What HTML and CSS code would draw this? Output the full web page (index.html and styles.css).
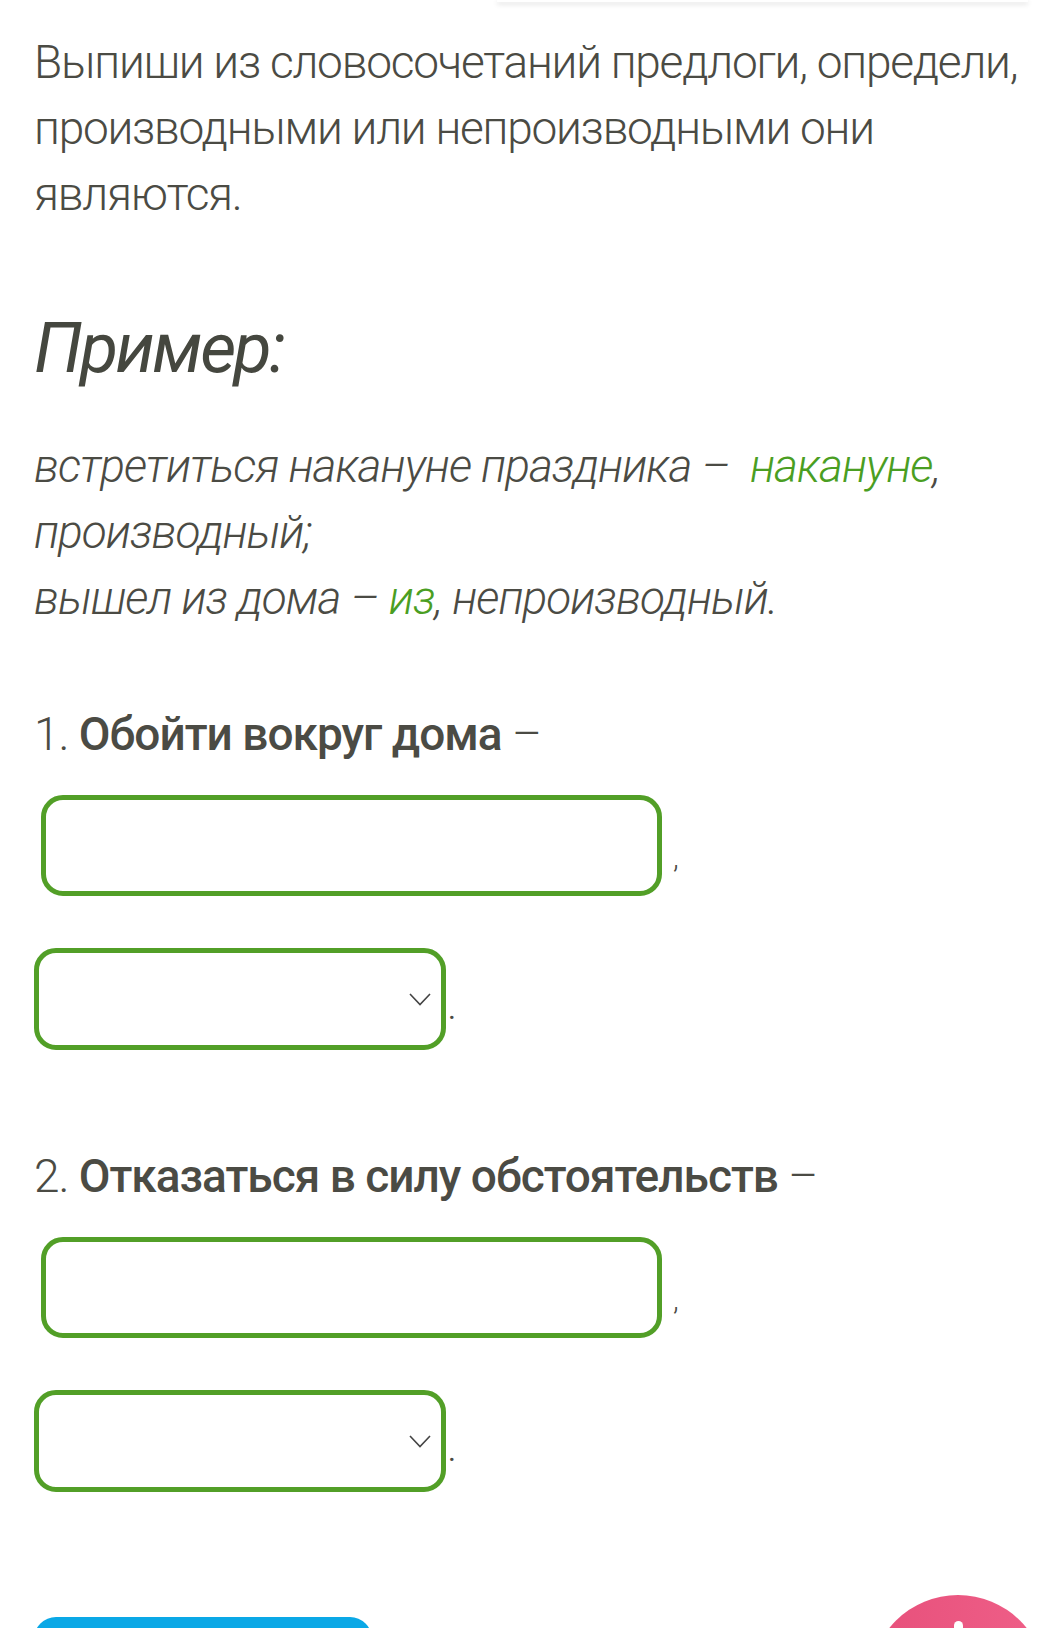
FILE: index.html
```html
<!DOCTYPE html>
<html lang="ru">
<head>
<meta charset="utf-8">
<link rel="stylesheet" href="styles.css">
</head>
<body>
<div class="page">
  <div class="card-edge"></div>
  <p class="task">Выпиши из словосочетаний предлоги, определи, производными или непроизводными они являются.</p>
  <h2 class="example-title">Пример:</h2>
  <p class="example">встретиться накануне праздника –&nbsp; <span class="green">накануне</span>, производный;<br>вышел из дома – <span class="green">из</span>, непроизводный.</p>

  <div class="item">
    <div class="item-title"><span class="num">1.</span> <b>Обойти вокруг дома</b> –</div>
    <div class="row row-input"><div class="input"></div><span class="comma">,</span></div>
    <div class="row row-select"><div class="select"><svg class="chev" width="22" height="13" viewBox="0 0 22 13"><path d="M1 1 L11 11.5 L21 1" fill="none" stroke="#444" stroke-width="1.6"/></svg></div><span class="dot">.</span></div>
  </div>

  <div class="item item2">
    <div class="item-title"><span class="num">2.</span> <b>Отказаться в силу обстоятельств</b> –</div>
    <div class="row row-input"><div class="input"></div><span class="comma">,</span></div>
    <div class="row row-select"><div class="select"><svg class="chev" width="22" height="13" viewBox="0 0 22 13"><path d="M1 1 L11 11.5 L21 1" fill="none" stroke="#444" stroke-width="1.6"/></svg></div><span class="dot">.</span></div>
  </div>

  <div class="footer">
    <div class="btn"></div>
    <div class="fab"><span class="fab-mark"></span></div>
  </div>
</div>
</body>
</html>
```
FILE: styles.css
```css
html, body {
  margin: 0;
  padding: 0;
  background: #ffffff;
  overflow: hidden;
}
body {
  width: 1060px;
  height: 1628px;
  font-family: Roboto, "Noto Sans", sans-serif;
  color: #4b4b44;
}
.page {
  padding-left: 34px;
}
.card-edge {
  margin-left: 463px;
  width: 531px;
  height: 2px;
  background: #fff;
  box-shadow: 0 2px 5px rgba(0, 0, 0, 0.18);
}
.task {
  margin: 27px 0 0 0;
  font-size: 46px;
  font-weight: 300;
  line-height: 66px;
  letter-spacing: -1.25px;
  width: 1010px;
}
.example-title {
  margin: 78px 0 0 0;
  font-size: 70px;
  font-style: italic;
  font-weight: 400;
  line-height: 86px;
  letter-spacing: -2.5px;
  color: #45473f;
}
.example {
  margin: 42px 0 0 0;
  font-size: 46px;
  font-weight: 300;
  font-style: italic;
  line-height: 66px;
  letter-spacing: -1px;
  width: 1000px;
}
.green {
  color: #4a9e22;
}
.item {
  margin-top: 70px;
}
.item2 {
  margin-top: 93px;
}
.item-title {
  font-size: 46px;
  line-height: 66px;
  font-weight: 300;
  letter-spacing: -1px;
}
.item-title b {
  font-weight: 500;
}
.row {
  display: flex;
  align-items: center;
}
.row-input {
  margin-top: 28px;
  padding-left: 7px;
}
.row-select {
  margin-top: 52px;
}
.input {
  width: 621px;
  height: 101px;
  box-sizing: border-box;
  border: 5px solid #529f27;
  border-radius: 22px;
}
.select {
  width: 412px;
  height: 102px;
  box-sizing: border-box;
  border: 5px solid #529f27;
  border-radius: 22px;
  display: flex;
  align-items: center;
  justify-content: flex-end;
  padding-right: 10px;
}
.chev {
  display: block;
}
.comma {
  font-size: 30px;
  font-weight: 300;
  margin-left: 11px;
  padding-top: 24px;
  line-height: 30px;
}
.dot {
  font-size: 30px;
  font-weight: 400;
  margin-left: 2px;
  padding-top: 20px;
  line-height: 30px;
}
.footer {
  margin-top: 103px;
  display: flex;
  justify-content: space-between;
  align-items: flex-start;
  padding-right: 14px;
}
.btn {
  margin-top: 22px;
  width: 338px;
  height: 60px;
  background: #0aa8e6;
  border-radius: 22px;
}
.fab {
  width: 176px;
  height: 176px;
  border-radius: 50%;
  background: linear-gradient(90deg, #e7507b, #ef5f88);
  display: flex;
  justify-content: center;
}
.fab-mark {
  margin-top: 26px;
  width: 9px;
  height: 14px;
  border-radius: 5px 5px 2px 2px;
  background: #fff;
}
```
